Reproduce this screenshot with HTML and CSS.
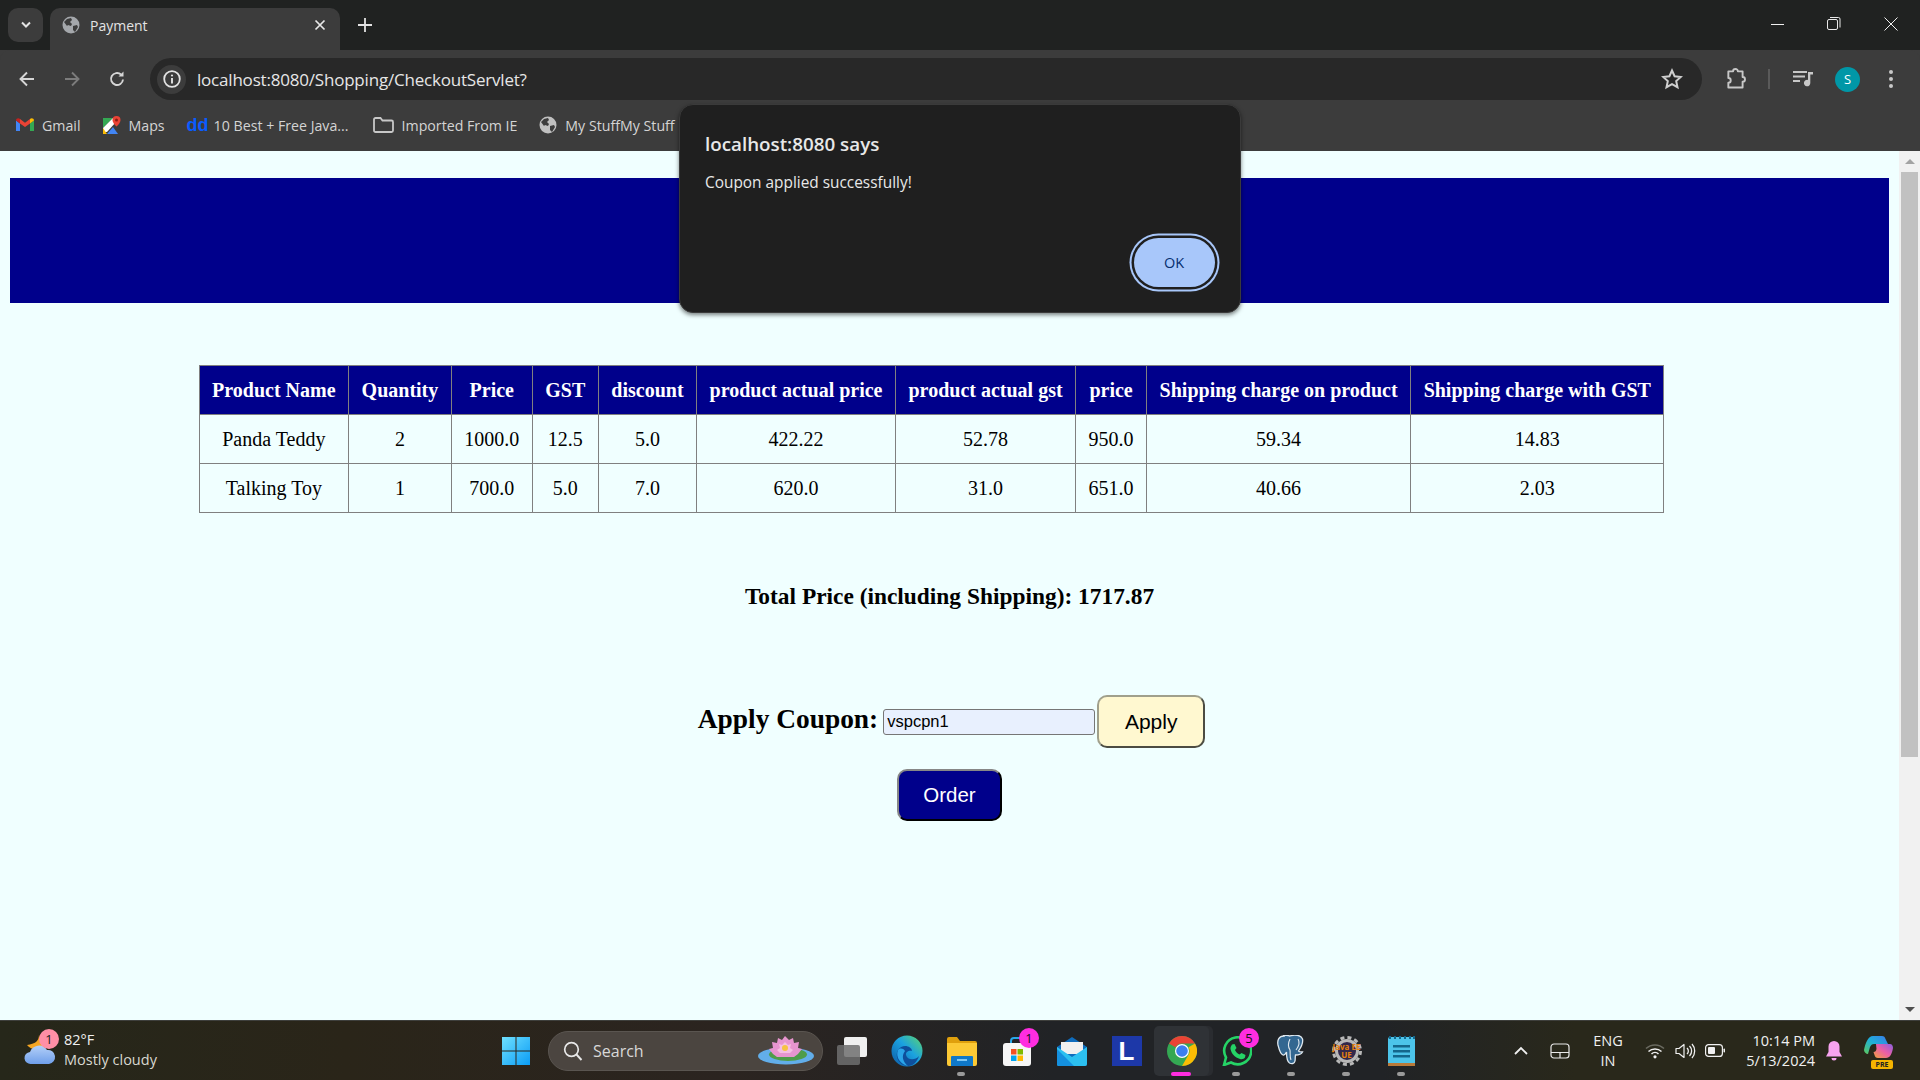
FILE: index.html
```html
<!DOCTYPE html>
<html lang="en">
<head>
    <meta charset="UTF-8">
    <meta name="viewport" content="width=device-width, initial-scale=1.0">
    <title>Payment</title>
    <link rel="stylesheet" href="styles.css">
</head>
<body>

<div class="tabstrip">
    <div class="tab-search">
        <svg width="12" height="8" viewBox="0 0 12 8"><path d="M2 1.500l4 4 4-4" fill="none" stroke="#e3e3e3" stroke-width="2"/></svg>
    </div>
    <div class="tab">
        <svg class="favicon" width="18" height="18" viewBox="0 0 18 18"><circle cx="9" cy="9" r="8.500" fill="#a4a7ab"/><path d="M2 6l3-3 4-1 1 2-2 2 2 2-1 2-3-1-1 1zM11 10l4-1 1 2-3 5-2-2z" fill="#3c3c3c"/></svg>
        <span class="tab-title">Payment</span>
        <svg class="tab-close" width="12" height="12" viewBox="0 0 12 12"><path d="M1.500 1.500l9 9M10.500 1.500l-9 9" stroke="#e8e8e8" stroke-width="1.700"/></svg>
    </div>
    <svg class="new-tab" width="14" height="14" viewBox="0 0 14 14"><path d="M7 0v14M0 7h14" stroke="#e3e3e3" stroke-width="1.800"/></svg>
    <div class="window-controls">
        <svg width="14" height="14" viewBox="0 0 14 14"><path d="M1 7.500h13" stroke="#f0f0f0"/></svg>
        <svg width="14" height="14" viewBox="0 0 14 14"><rect x="0.500" y="2.500" width="10" height="10" rx="1.500" fill="none" stroke="#e8e8e8"/><path d="M3 .5h8.500a1.500 1.500 0 0 1 1.500 1.500v8.500" fill="none" stroke="#e8e8e8"/></svg>
        <svg width="14" height="14" viewBox="0 0 14 14"><path d="M.5.5l13 13M13.500.5l-13 13" stroke="#f0f0f0"/></svg>
    </div>
</div>

<div class="toolbar">
    <svg class="nav-icon" width="18" height="18" viewBox="0 0 18 18"><path d="M16 9H3M9 2.500L2.500 9 9 15.500" fill="none" stroke="#d6d6d6" stroke-width="1.900"/></svg>
    <svg class="nav-icon" width="18" height="18" viewBox="0 0 18 18"><path d="M2 9h13M9 2.500L15.500 9 9 15.500" fill="none" stroke="#7c7c7c" stroke-width="1.900"/></svg>
    <svg class="nav-icon" width="18" height="18" viewBox="0 0 18 18"><path d="M15 9.500A6 6 0 1 1 13 4.500" fill="none" stroke="#d6d6d6" stroke-width="1.900"/><path d="M15.500 1.500v5h-5z" fill="#d6d6d6"/></svg>
    <div class="omnibox">
        <div class="site-info">
            <svg width="18" height="18" viewBox="0 0 18 18"><circle cx="9" cy="9" r="7.800" fill="none" stroke="#e3e3e3" stroke-width="1.800"/><path d="M9 8v5.500" stroke="#e3e3e3" stroke-width="1.900"/><circle cx="9" cy="5.500" r="1.100" fill="#e3e3e3"/></svg>
        </div>
        <span class="url">localhost:8080/Shopping/CheckoutServlet?</span>
        <svg class="star" width="22" height="22" viewBox="0 0 22 22"><path d="M11 2.500l2.600 5.700 6.200.7-4.600 4.200 1.300 6.100L11 16.100l-5.500 3.100 1.300-6.100-4.600-4.200 6.200-.7z" fill="none" stroke="#cfcfcf" stroke-width="2"/></svg>
    </div>
    <div class="toolbar-actions">
        <svg width="22" height="22" viewBox="0 0 22 22"><path d="M3 3h5a2.500 2.500 0 0 1 5 0h5v6a2.200 2.200 0 0 1 0 5v6H3v-5a2.500 2.500 0 0 0 0-5z" transform="translate(.5 .5) scale(.95)" fill="none" stroke="#c8c8c8" stroke-width="2" stroke-linejoin="round"/></svg>
        <span class="toolbar-sep"></span>
        <svg width="22" height="18" viewBox="0 0 22 18"><path d="M1 2h14M1 6.500h12M1 11h7" stroke="#c8c8c8" stroke-width="2"/><path d="M16 2h5v2.500h-2.700V13a3.200 3.200 0 1 1-2.300-3z" fill="#c8c8c8"/></svg>
        <span class="avatar">S</span>
        <svg width="6" height="20" viewBox="0 0 6 20"><circle cx="3" cy="3" r="2" fill="#c8c8c8"/><circle cx="3" cy="10" r="2" fill="#c8c8c8"/><circle cx="3" cy="17" r="2" fill="#c8c8c8"/></svg>
    </div>
</div>

<div class="bookmarks">
    <span class="bookmark">
        <svg width="18" height="14" viewBox="0 0 18 14"><path d="M0 2.500V13h4V5.500z" fill="#4285f4"/><path d="M14 5.500V13h4V2.500z" fill="#34a853"/><path d="M14 1v4.500L9 9 4 5.500V1l5 3.800z" fill="#ea4335"/><path d="M0 2.500C0 .5 2.500-.5 4 1v4.500z" fill="#c5221f"/><path d="M18 2.500c0-2-2.500-3-4-1.500v4.500z" fill="#fbbc04"/></svg>
        Gmail
    </span>
    <span class="bookmark">
        <svg width="18" height="18" viewBox="0 0 18 18"><path d="M0 2h10l-10 10z" fill="#34a853"/><path d="M0 12L10 2l3 4-9 10H0z" fill="#fff"/><path d="M0 12v6h4z" fill="#fbbc04"/><path d="M4 18l6-7 5 7z" fill="#4285f4"/><path d="M13.500 0a4 4 0 0 1 4 4c0 3-4 6.500-4 6.500s-4-3.500-4-6.500a4 4 0 0 1 4-4z" fill="#ea4335"/><circle cx="13.500" cy="4" r="1.500" fill="#8c1b13"/></svg>
        Maps
    </span>
    <span class="bookmark bookmark-dd"><b class="dd-logo">dd</b> 10 Best + Free Java...</span>
    <span class="bookmark bookmark-folder">
        <svg width="21" height="16" viewBox="0 0 21 16"><path d="M1 2.500A1.500 1.500 0 0 1 2.500 1h5l2 2.500h9A1.500 1.500 0 0 1 20 5v8.500a1.500 1.500 0 0 1-1.500 1.500h-16A1.500 1.500 0 0 1 1 13.500z" fill="none" stroke="#c8c8c8" stroke-width="1.800"/></svg>
        Imported From IE
    </span>
    <span class="bookmark">
        <svg width="18" height="18" viewBox="0 0 18 18"><circle cx="9" cy="9" r="8.500" fill="#c0c0c0"/><path d="M2 6l3-3 4-1 1 2-2 2 2 2-1 2-3-1-1 1zM11 10l4-1 1 2-3 5-2-2z" fill="#3c3c3c"/></svg>
        My StuffMy Stuff
    </span>
</div>

<div class="viewport">
    <main class="page">
        <div class="banner"></div>

        <table class="order-table">
            <thead>
                <tr>
                    <th>Product Name</th>
                    <th>Quantity</th>
                    <th>Price</th>
                    <th>GST</th>
                    <th>discount</th>
                    <th>product actual price</th>
                    <th>product actual gst</th>
                    <th>price</th>
                    <th>Shipping charge on product</th>
                    <th>Shipping charge with GST</th>
                </tr>
            </thead>
            <tbody>
                <tr>
                    <td>Panda Teddy</td>
                    <td>2</td>
                    <td>1000.0</td>
                    <td>12.5</td>
                    <td>5.0</td>
                    <td>422.22</td>
                    <td>52.78</td>
                    <td>950.0</td>
                    <td>59.34</td>
                    <td>14.83</td>
                </tr>
                <tr>
                    <td>Talking Toy</td>
                    <td>1</td>
                    <td>700.0</td>
                    <td>5.0</td>
                    <td>7.0</td>
                    <td>620.0</td>
                    <td>31.0</td>
                    <td>651.0</td>
                    <td>40.66</td>
                    <td>2.03</td>
                </tr>
            </tbody>
        </table>

        <h3 class="total">Total Price (including Shipping): 1717.87</h3>

        <form class="coupon">
            <label class="coupon-label" for="coupon">Apply Coupon:</label>
            <input class="coupon-input" id="coupon" type="text" value="vspcpn1">
            <button class="apply-btn" type="button">Apply</button>
        </form>

        <button class="order-btn" type="button">Order</button>
    </main>

    <div class="scrollbar">
        <span class="arrow-up"></span>
        <div class="scroll-thumb"></div>
        <span class="arrow-down"></span>
    </div>
</div>

<div class="taskbar">
    <div class="weather">
        <div class="weather-icon">
            <svg width="32" height="34" viewBox="0 0 32 34">
                <defs><linearGradient id="cloud" x1="0" y1="0" x2="0" y2="1"><stop offset="0" stop-color="#b4d0f8"/><stop offset="1" stop-color="#6f9fea"/></linearGradient></defs>
                <path d="M15 1c0 6-4 9-12 10 3 4 9 6 17 3z" fill="#f5a623"/>
                <path d="M7 30a6 6 0 0 1-1-12 9.500 9.500 0 0 1 17-2 7 7 0 0 1 2 14z" fill="url(#cloud)"/>
            </svg>
            <span class="weather-badge">1</span>
        </div>
        <div class="weather-text">
            <span>82°F</span>
            <span class="weather-desc">Mostly cloudy</span>
        </div>
    </div>

    <div class="task-center">
        <svg class="win-logo" width="30" height="30" viewBox="0 0 30 30">
            <defs><linearGradient id="win" x1="0" y1="0" x2="1" y2="1"><stop offset="0" stop-color="#6fe0ff"/><stop offset="1" stop-color="#0a9cf5"/></linearGradient></defs>
            <path d="M1 1h13.500v13.500H1zM15.500 1H29v13.500H15.500zM1 15.500h13.500V29H1zM15.500 15.500H29V29H15.500z" fill="url(#win)"/>
        </svg>
        <div class="searchbox">
            <svg width="20" height="20" viewBox="0 0 20 20"><circle cx="8.500" cy="8.500" r="6.800" fill="none" stroke="#e8e8e8" stroke-width="1.700"/><path d="M13.500 13.500l5 5.500" stroke="#e8e8e8" stroke-width="1.900"/></svg>
            <span class="search-label">Search</span>
            <svg class="lotus" width="56" height="29" viewBox="0 0 56 29">
                <ellipse cx="28" cy="20" rx="28" ry="8.500" fill="#62aeea"/>
                <ellipse cx="30" cy="18.500" rx="19" ry="6.500" fill="#4f9c4a"/>
                <path d="M27 0l4 4 4-2 1 5 5-1-1 6 4 1-4 5-4 3H19l-4-3-4-5 4-1-1-6 5 1 1-5 4 2z" fill="#e795cf"/>
                <path d="M27 6l3 3 3-1-1 4 3 2-3 3H22l-3-3 3-2-1-4 3 1z" fill="#f6bfe2"/>
                <circle cx="27" cy="12" r="3" fill="#f6c343"/>
            </svg>
        </div>
        <div class="task-icons">
            <span class="task-item">
                <svg width="30" height="28" viewBox="0 0 30 28"><rect x="7" y="0" width="23" height="20" rx="2" fill="#f0f0f0"/><rect x="0" y="8" width="23" height="20" rx="2" fill="#6e6e6e" fill-opacity=".85"/></svg>
            </span>
            <span class="task-item">
                <svg width="32" height="32" viewBox="0 0 32 32">
                    <defs><linearGradient id="edge" x1="0" y1="1" x2="1" y2="0"><stop offset="0" stop-color="#0c59a4"/><stop offset=".55" stop-color="#1ba2e0"/><stop offset="1" stop-color="#5fd86b"/></linearGradient></defs>
                    <circle cx="16" cy="16" r="15.500" fill="url(#edge)"/>
                    <path d="M28 21c-4 5-12 4-13-1-.6-3 3-5 6-4 0-5-10-8-14-1-4 7 2 16 10 16 5 0 9-4 11-10z" fill="#0e4f9c"/>
                    <path d="M7 15c-3 7 3 15 10 16-5-4-7-10-3-15-2-3-5-3-7-1z" fill="#2aa4e8"/>
                </svg>
            </span>
            <span class="task-item running">
                <svg width="30" height="30" viewBox="0 0 30 30"><path d="M0 3a2 2 0 0 1 2-2h8l3 4h15a2 2 0 0 1 2 2v4H0z" fill="#e0a00d"/><path d="M0 7h30v21a2 2 0 0 1-2 2H2a2 2 0 0 1-2-2z" fill="#fcc935"/><path d="M5 20h20a1 1 0 0 1 1 1v9H4v-9a1 1 0 0 1 1-1z" fill="#0f78c9"/><rect x="10" y="23" width="10" height="2" fill="#7ec8f5"/></svg>
            </span>
            <span class="task-item">
                <svg width="30" height="30" viewBox="0 0 30 30"><path d="M9 8V5a3 3 0 0 1 3-3h6a3 3 0 0 1 3 3v3" fill="none" stroke="#28a8ea" stroke-width="2"/><rect x="1" y="7" width="28" height="23" rx="3" fill="#f6f6f6"/><path d="M9 13h5.500v5.500H9z" fill="#f25022"/><path d="M15.500 13H21v5.500h-5.500z" fill="#7fba00"/><path d="M9 19.500h5.500V25H9z" fill="#00a4ef"/><path d="M15.500 19.500H21V25h-5.500z" fill="#ffb900"/></svg>
                <span class="task-badge">1</span>
            </span>
            <span class="task-item">
                <svg width="30" height="30" viewBox="0 0 30 30"><path d="M0 11L15 1l15 10v17a2 2 0 0 1-2 2H2a2 2 0 0 1-2-2z" fill="#0f6cbd"/><path d="M4 6h22v12H4z" fill="#f0f0f0"/><path d="M0 11l15 10 15-10v17a2 2 0 0 1-2 2H2a2 2 0 0 1-2-2z" fill="#2cc0f0"/><path d="M0 13l17 17H2a2 2 0 0 1-2-2z" fill="#1490df"/></svg>
            </span>
            <span class="task-item">
                <span class="l-icon">L</span>
            </span>
            <span class="task-item active">
                <svg width="30" height="30" viewBox="0 0 30 30"><circle cx="15" cy="15" r="15" fill="#34a853"/><path d="M15 0a15 15 0 0 1 13 7.500H15A7.500 7.500 0 0 0 8.500 11.300L2 7.500A15 15 0 0 1 15 0z" fill="#ea4335"/><path d="M28 7.500A15 15 0 0 1 15 30l6.500-11.200A7.500 7.500 0 0 0 21.500 11.300z" fill="#fbbc04"/><circle cx="15" cy="15" r="7" fill="#fff"/><circle cx="15" cy="15" r="5.800" fill="#3b7ff0"/></svg>
            </span>
            <span class="task-item running">
                <svg width="30" height="30" viewBox="0 0 30 30"><path d="M2 29l2-7.500a13.500 13.500 0 1 1 5 5z" fill="none" stroke="#25d366" stroke-width="2.600"/><path d="M10 8.500l2.500-.5 2 4-1.500 2c1 2 2.500 3.500 4.500 4.500l2-1.500 4 2-.5 2.500c-1 1.500-3 2-5 1.500-5-1.500-8.500-5-9.500-10-.3-1.500.5-3 1.500-4.500z" fill="#25d366"/></svg>
                <span class="task-badge">5</span>
            </span>
            <span class="task-item running">
                <svg width="30" height="32" viewBox="0 0 30 32"><path d="M7 1C2 1 0 5 1 10c1 4 2 9 5 10 2 .5 3-2 3.500-3 0 4 0 9 3 11 2 1 5 1 5.500-2 .4-2 0-4 .5-6 3 0 6-1 7-3-2 0-3.500 0-4-1 2-3 5-8 4-12-1-3-5-4-8-4-2 0-4 1-5 1-2-1-4-1-6-1z" fill="#336791" stroke="#dfe8ef" stroke-width="1.300"/><path d="M13 4c-2 4-2 8 0 11 .5 3-.5 7 1 10M21 4c2 3 1 7-2 11" fill="none" stroke="#dfe8ef" stroke-width="1.100"/></svg>
            </span>
            <span class="task-item running">
                <span class="gear-icon">
                    <svg width="30" height="30" viewBox="0 0 30 30"><circle cx="15" cy="15" r="10.500" fill="#33284a" stroke="#b8b8b8" stroke-width="3"/><circle cx="15" cy="15" r="13.500" fill="none" stroke="#b8b8b8" stroke-width="3" stroke-dasharray="4 3.070"/></svg>
                    <span class="gear-text">Java EE<br>UE</span>
                </span>
            </span>
            <span class="task-item running">
                <svg width="30" height="32" viewBox="0 0 30 32"><rect x="1" y="2" width="27" height="28" rx="2" fill="#4cc4ea"/><rect x="1" y="28" width="27" height="3" fill="#b97a3a"/><path d="M6 10h17v2.500H6zM6 15h17v2.500H6zM6 20h17v2.500H6z" fill="#14678c"/><path d="M3 1v3M8 1v3M13 1v3M18 1v3M23 1v3M27 1v3" stroke="#14678c" stroke-width="2"/></svg>
            </span>
        </div>
    </div>

    <div class="tray">
        <svg width="14" height="9" viewBox="0 0 14 9"><path d="M1 8l6-6 6 6" fill="none" stroke="#f0f0f0" stroke-width="1.800"/></svg>
        <svg class="touchpad" width="20" height="16" viewBox="0 0 20 16"><rect x="1" y="1" width="18" height="14" rx="3" fill="none" stroke="#e8e8e8" stroke-width="1.200"/><path d="M1 9.500h18M10 9.500V15" stroke="#e8e8e8" stroke-width="1.200"/></svg>
        <span class="lang">ENG<br>IN</span>
        <svg class="wifi" width="20" height="16" viewBox="0 0 20 16"><path d="M1 5.500a13 13 0 0 1 18 0" fill="none" stroke="#6a6a60" stroke-width="1.500"/><path d="M3.500 8.500a9.500 9.500 0 0 1 13 0M6.500 11a5 5 0 0 1 7 0" fill="none" stroke="#f0f0f0" stroke-width="1.500"/><circle cx="10" cy="13.800" r="1.600" fill="#f0f0f0"/></svg>
        <svg class="speaker" width="21" height="18" viewBox="0 0 21 18"><path d="M1 6.500h3L9 2.500v13l-5-4H1z" fill="none" stroke="#f0f0f0" stroke-width="1.200" stroke-linejoin="round"/><path d="M12 6a4 4 0 0 1 0 6M14.500 4a7 7 0 0 1 0 10M17 2a10.500 10.500 0 0 1 0 14" fill="none" stroke="#f0f0f0" stroke-width="1.300"/></svg>
        <svg class="battery" width="20" height="13" viewBox="0 0 20 13"><rect x=".6" y=".6" width="16.800" height="11.800" rx="3" fill="none" stroke="#f0f0f0" stroke-width="1.200"/><rect x="3" y="3" width="7" height="7" rx="1" fill="#f0f0f0"/><rect x="18.500" y="4.500" width="1.500" height="4" rx=".7" fill="#f0f0f0"/></svg>
        <div class="clock">
            <span>10:14 PM</span>
            <span>5/13/2024</span>
        </div>
        <svg class="bell" width="16" height="20" viewBox="0 0 16 20"><path d="M8 0a5.500 5.500 0 0 1 5.500 5.500V11l2.500 4.500H0L2.500 11V5.500A5.500 5.500 0 0 1 8 0z" fill="#f7a3ef"/><path d="M5.500 17h5a2.500 2.500 0 0 1-5 0z" fill="#f7a3ef"/></svg>
        <span class="copilot">
            <svg width="30" height="24" viewBox="0 0 30 24">
                <defs>
                    <linearGradient id="cop1" x1="0" y1="1" x2="1" y2="0"><stop offset="0" stop-color="#5fc95a"/><stop offset=".5" stop-color="#1fb0d8"/><stop offset="1" stop-color="#3a7bea"/></linearGradient>
                    <linearGradient id="cop2" x1="0" y1="1" x2="1" y2="0"><stop offset="0" stop-color="#f0a23a"/><stop offset=".5" stop-color="#ec5fa5"/><stop offset="1" stop-color="#8a5fe0"/></linearGradient>
                </defs>
                <path d="M9 0h9c2 0 3 1 3.500 3L24 8H10c-2 0-3 1-4 3l-2 7c-2 0-4-2-4-4 1-6 4-14 9-14z" fill="url(#cop1)"/>
                <path d="M12 8h14c2 0 3 2 3 4-1 6-3 10-7 10h-8c-2 0-3-1-3.500-3l-1-3c2 0 2.500-1 3-3z" fill="url(#cop2)"/>
            </svg>
            <span class="pre-tag">PRE</span>
        </span>
    </div>
</div>

<!-- js alert box -->
<div class="alert-box">
    <p class="alert-title">localhost:8080 says</p>
    <p class="alert-msg">Coupon applied successfully!</p>
    <div class="alert-actions">
        <button class="alert-ok" type="button">OK</button>
    </div>
</div>

</body>
</html>
```

FILE: styles.css
```css
* {
    box-sizing: border-box;
}
body {
    margin: 0;
    height: 1080px;
    display: flex;
    flex-direction: column;
    overflow: hidden;
    background-color: #3c3c3c;
    font-family: "Open Sans", sans-serif;
    position: relative;
}

/* browser chrome */
.tabstrip {
    height: 50px;
    flex: none;
    display: flex;
    align-items: flex-end;
    background-color: #202221;
    padding-left: 8px;
}
.tab-search {
    width: 35px;
    height: 34px;
    margin-bottom: 8px;
    border-radius: 10px;
    background-color: #3c3c3c;
    display: flex;
    align-items: center;
    justify-content: center;
}
.tab {
    width: 290px;
    height: 42px;
    margin-left: 7px;
    padding: 0 14px 8px 12px;
    border-radius: 10px 10px 0 0;
    background-color: #3c3c3c;
    display: flex;
    align-items: center;
    color: #e3e3e3;
    font-size: 14px;
}
.tab-title {
    flex: 1;
    margin-left: 10px;
}
.new-tab {
    margin: 0 0 18px 18px;
}
.window-controls {
    margin-left: auto;
    margin-bottom: 19px;
    padding-right: 22px;
    display: flex;
    gap: 43px;
}
.toolbar {
    height: 50px;
    flex: none;
    display: flex;
    align-items: center;
    padding: 8px 0 0 18px;
    border-radius: 10px 10px 0 0;
    background-color: #3c3c3c;
}
.nav-icon {
    margin-right: 27px;
}
.omnibox {
    width: 1552px;
    height: 42px;
    margin-left: -3px;
    border-radius: 21px;
    background-color: #282828;
    display: flex;
    align-items: center;
    padding: 0 19px 0 7px;
}
.site-info {
    width: 29px;
    height: 29px;
    border-radius: 50%;
    background-color: #3c3c3c;
    display: flex;
    align-items: center;
    justify-content: center;
}
.url {
    flex: 1;
    margin-left: 11px;
    color: #e6e6e6;
    font-size: 17px;
    letter-spacing: -0.2px;
}
.toolbar-actions {
    flex: 1;
    display: flex;
    align-items: center;
    padding-left: 23px;
}
.toolbar-sep {
    width: 2px;
    height: 20px;
    margin: 0 22px 0 21px;
    background-color: #5a5a5a;
}
.avatar {
    width: 25px;
    height: 25px;
    margin: 0 28px 0 21px;
    border-radius: 50%;
    background-color: #0097a7;
    color: #fff;
    font-size: 13px;
    text-align: center;
    line-height: 25px;
}
.bookmarks {
    height: 51px;
    flex: none;
    display: flex;
    align-items: center;
    padding: 0 0 1px 16px;
    gap: 22px;
    background-color: #3c3c3c;
    color: #d4d4d4;
    font-size: 14.200px;
}
.bookmark {
    display: flex;
    align-items: center;
    gap: 8px;
    white-space: nowrap;
}
.bookmark-dd {
    gap: 5px;
}
.bookmark-folder {
    margin-left: 2px;
}
.dd-logo {
    color: #0a5cff;
    font-size: 18px;
    line-height: 1;
    font-family: "Liberation Sans", sans-serif;
}

/* the page itself */
.viewport {
    flex: 1;
    min-height: 0;
    display: flex;
    background-color: #f0ffff;
}
.page {
    flex: 1;
    padding: 27px 10px 0;
    display: flex;
    flex-direction: column;
    align-items: center;
    font-family: "Liberation Serif", serif;
    color: #000;
}
.banner {
    width: 100%;
    height: 125px;
    flex: none;
    background-color: #00008b;
}
.order-table {
    margin: 62px 0 0 -36px;
    border-collapse: collapse;
    font-size: 20px;
    text-align: center;
}
.order-table th,
.order-table td {
    padding: 12.500px;
    border: 1px solid #808080;
    font-weight: normal;
}
.order-table th {
    background-color: #00008b;
    color: #fff;
    font-weight: bold;
}
.total {
    margin: 70px 0 0;
    font-size: 23.400px;
    font-weight: bold;
}
.coupon {
    margin: 85px 0 0 4px;
    display: flex;
    align-items: center;
}
.coupon-label {
    font-size: 27.400px;
    font-weight: bold;
    margin: 0 5px 4px 0;
}
.coupon-input {
    width: 212px;
    height: 26px;
    padding: 1px 3px;
    border: 1px solid #767676;
    border-radius: 3px;
    background-color: #e8f0fe;
    font-family: "Liberation Sans", sans-serif;
    font-size: 16.500px;
    color: #000;
}
.apply-btn {
    width: 108px;
    height: 53px;
    margin-left: 2px;
    border: 2px outset #a0a08c;
    border-radius: 10px;
    background-color: #fff8d0;
    font-family: "Liberation Sans", sans-serif;
    font-size: 21px;
    color: #000;
}
.order-btn {
    width: 105px;
    height: 52px;
    margin-top: 21px;
    border: 2px outset #333;
    border-radius: 10px;
    background-color: #00008b;
    font-family: "Liberation Sans", sans-serif;
    font-size: 20.500px;
    color: #fff;
}
.scrollbar {
    width: 21px;
    flex: none;
    display: flex;
    flex-direction: column;
    align-items: center;
    background-color: #f1f1f1;
}
.arrow-up {
    margin: 8px 0 8px;
    border: 5px solid transparent;
    border-top: 0;
    border-bottom: 5px solid #a3a3a3;
}
.scroll-thumb {
    width: 17px;
    height: 585px;
    background-color: #c1c1c1;
}
.arrow-down {
    margin-top: auto;
    margin-bottom: 8px;
    border: 5px solid transparent;
    border-bottom: 0;
    border-top: 5px solid #505050;
}

/* windows taskbar */
.taskbar {
    height: 60px;
    flex: none;
    display: flex;
    align-items: center;
    border-top: 1px solid #3e3f3c;
    background: linear-gradient(90deg, #26271a 0%, #2a2519 18%, #2b2420 38%, #212326 55%, #212326 72%, #29281b 82%, #29281b 100%);
    color: #f0f0f0;
    position: relative;
}
.weather {
    width: 501px;
    flex: none;
    display: flex;
    align-items: center;
    padding-left: 24px;
    font-size: 14.500px;
    line-height: 20px;
}
.weather-icon {
    width: 32px;
    height: 34px;
    position: relative;
    margin-right: 8px;
}
.weather-badge {
    position: absolute;
    left: 15px;
    top: -5px;
    width: 20px;
    height: 20px;
    border-radius: 50%;
    background-color: #ff8fa6;
    color: #222;
    font-size: 13px;
    line-height: 20px;
    text-align: center;
}
.weather-text {
    display: flex;
    flex-direction: column;
    padding-bottom: 2px;
}
.weather-desc {
    color: #d8d8d0;
}
.task-center {
    display: flex;
    align-items: center;
}
.searchbox {
    width: 275px;
    height: 40px;
    margin-left: 17px;
    padding: 0 8px 0 14px;
    border-radius: 20px;
    border: 1px solid #5a5550;
    background-color: #4b4540;
    display: flex;
    align-items: center;
    font-size: 16px;
    color: #d8d8d8;
}
.search-label {
    flex: 1;
    margin-left: 10px;
}
.task-icons {
    display: flex;
    margin-left: 1px;
}
.task-item {
    width: 55px;
    height: 50px;
    display: flex;
    align-items: center;
    justify-content: center;
    position: relative;
}
.task-item.running::after {
    content: "";
    position: absolute;
    left: 23px;
    bottom: 0;
    width: 8px;
    height: 4px;
    border-radius: 2px;
    background-color: #9a9a9a;
}
.task-item.active {
    background-color: #2f3236;
    border-radius: 5px;
    box-shadow: 4px 0 0 #2a2c30;
}
.task-item.active::after {
    content: "";
    position: absolute;
    left: 17px;
    bottom: 0;
    width: 20px;
    height: 4px;
    border-radius: 2px;
    background-color: #ff2de0;
}
.task-badge {
    position: absolute;
    left: 30px;
    top: 2px;
    width: 20px;
    height: 20px;
    border-radius: 50%;
    background-color: #ff2de0;
    color: #111;
    font-size: 13px;
    line-height: 20px;
    text-align: center;
}
.l-icon {
    width: 30px;
    height: 30px;
    background-color: #1d38a8;
    color: #fff;
    font-family: "Liberation Sans", sans-serif;
    font-size: 26px;
    font-weight: bold;
    line-height: 30px;
    text-align: center;
}
.gear-icon {
    width: 30px;
    height: 30px;
    position: relative;
}
.gear-text {
    position: absolute;
    left: -2px;
    top: 7px;
    width: 34px;
    color: #e8820f;
    font-size: 8px;
    font-weight: 700;
    line-height: 8px;
    text-align: center;
}
.tray {
    position: absolute;
    right: 0;
    top: 0;
    bottom: 0;
    width: 406px;
    display: flex;
    align-items: center;
}
.touchpad {
    margin-left: 22px;
}
.lang {
    width: 50px;
    margin-left: 13px;
    font-size: 14.500px;
    line-height: 20px;
    text-align: center;
}
.wifi {
    margin-left: 12px;
}
.speaker {
    margin-left: 10px;
}
.battery {
    margin-left: 9px;
}
.clock {
    width: 90px;
    display: flex;
    flex-direction: column;
    align-items: flex-end;
    font-size: 14.500px;
    line-height: 20px;
}
.bell {
    margin-left: 11px;
}
.copilot {
    margin-left: 22px;
    position: relative;
    width: 30px;
    height: 30px;
}
.pre-tag {
    position: absolute;
    left: 7px;
    bottom: -3px;
    width: 22px;
    height: 9px;
    border-radius: 2px;
    background-color: #f5b400;
    color: #222;
    font-size: 7px;
    font-weight: bold;
    line-height: 9px;
    text-align: center;
}

/* alert dialog sits over everything */
.alert-box {
    position: absolute;
    left: 679px;
    top: 104px;
    width: 562px;
    height: 209px;
    padding: 27px 21px 0 25px;
    border-radius: 14px;
    border: 1px solid #3a3a3a;
    background-color: #1f1f1f;
    box-shadow: 0 2px 4px rgba(0,0,0,0.5);
    color: #e8e8e8;
}
.alert-title {
    margin: 0;
    font-size: 18.800px;
    font-weight: 600;
    line-height: 24px;
}
.alert-msg {
    margin: 17px 0 0;
    font-size: 15.400px;
    line-height: 20px;
}
.alert-actions {
    display: flex;
    justify-content: flex-end;
    margin-top: 40px;
}
.alert-ok {
    width: 81px;
    height: 49px;
    margin: 4.500px;
    border: none;
    border-radius: 25px;
    box-shadow: 0 0 0 2.500px #1f1f1f, 0 0 0 4.500px #a8c7fa;
    background-color: #a8c7fa;
    color: #062e6f;
    font-family: "Open Sans", sans-serif;
    font-size: 14.500px;
    font-weight: 500;
}
```
